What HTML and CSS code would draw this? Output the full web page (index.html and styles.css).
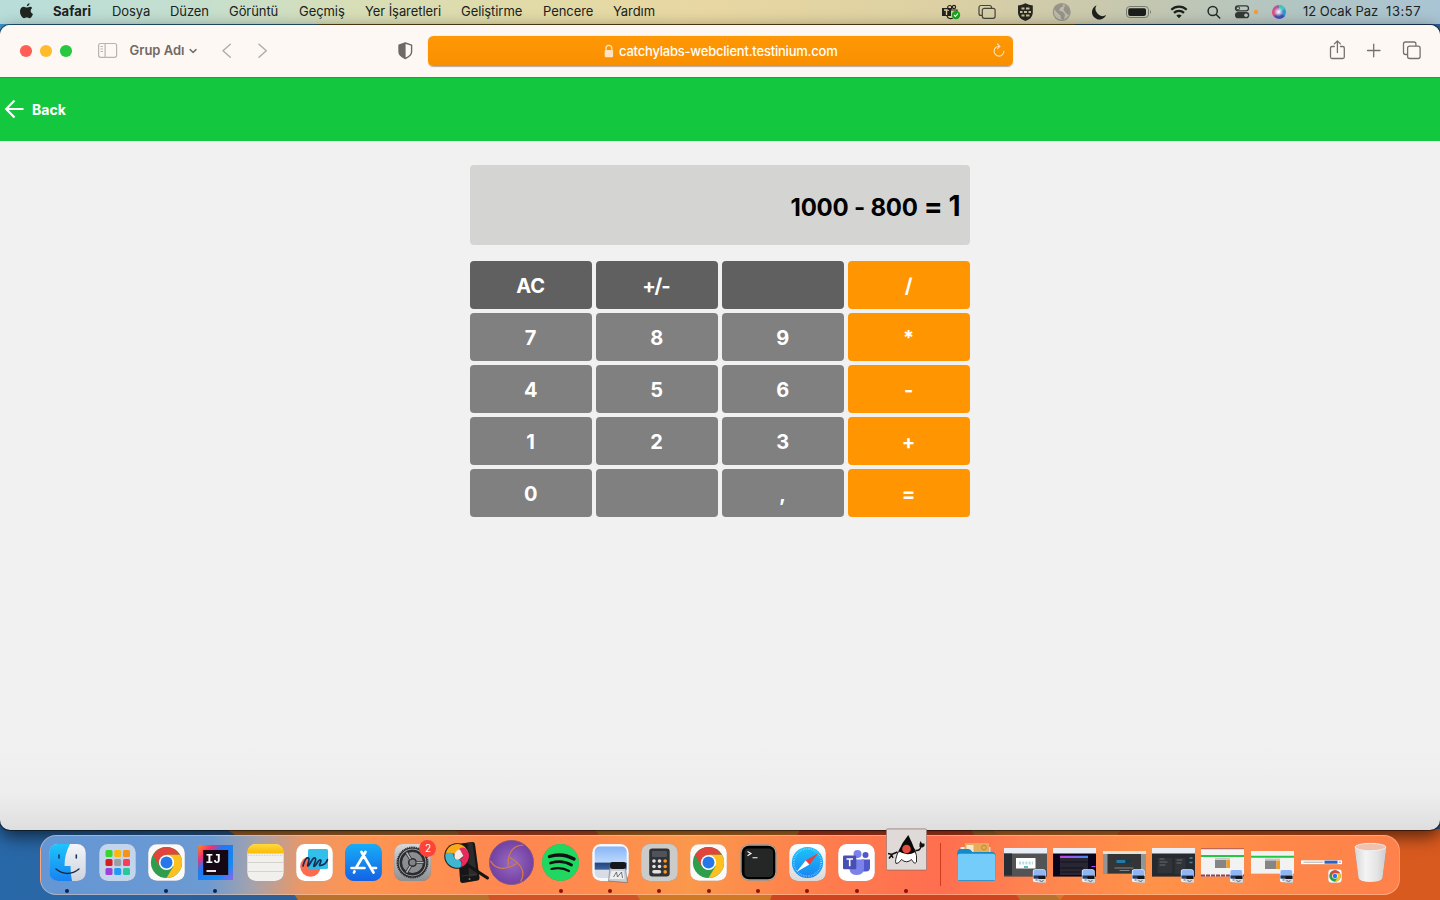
FILE: index.html
```html
<!DOCTYPE html>
<html lang="tr">
<head>
<meta charset="utf-8">
<title>Calculator</title>
<link rel="stylesheet" href="styles.css">
</head>
<body>
<svg class="defs" width="0" height="0" aria-hidden="true">
  <defs>
    <linearGradient id="gBlue" x1="0" y1="0" x2="0" y2="1"><stop offset="0" stop-color="#1cc5fc"/><stop offset="1" stop-color="#1a82f0"/></linearGradient>
    <linearGradient id="gStore" x1="0" y1="0" x2="0" y2="1"><stop offset="0" stop-color="#18adf8"/><stop offset="1" stop-color="#1462e4"/></linearGradient>
    <linearGradient id="gGrey" x1="0" y1="0" x2="0" y2="1"><stop offset="0" stop-color="#d6d8da"/><stop offset="1" stop-color="#8d8f92"/></linearGradient>
    <linearGradient id="gLight" x1="0" y1="0" x2="0" y2="1"><stop offset="0" stop-color="#f3f5f8"/><stop offset="1" stop-color="#cdd3de"/></linearGradient>
    <linearGradient id="gWhite" x1="0" y1="0" x2="0" y2="1"><stop offset="0" stop-color="#fff"/><stop offset="1" stop-color="#d9d9d9"/></linearGradient>
    <linearGradient id="gYellow" x1="0" y1="0" x2="0" y2="1"><stop offset="0" stop-color="#ffd93e"/><stop offset="1" stop-color="#f9bb04"/></linearGradient>
    <linearGradient id="gIj" x1="0" y1="0" x2="1" y2="1"><stop offset="0" stop-color="#ff8a1c"/><stop offset=".22" stop-color="#f92d71"/><stop offset=".38" stop-color="#2178f8"/><stop offset=".75" stop-color="#0d8cf8"/><stop offset="1" stop-color="#9460f0"/></linearGradient>
    <radialGradient id="gPurple"><stop offset="0" stop-color="#966bc2"/><stop offset="1" stop-color="#7340a2"/></radialGradient>
    <linearGradient id="gSky" x1="0" y1="0" x2="0" y2="1"><stop offset="0" stop-color="#86b4f5"/><stop offset=".5" stop-color="#bcd9ff"/><stop offset=".52" stop-color="#25457e"/><stop offset=".72" stop-color="#3c62a0"/><stop offset=".75" stop-color="#d8dce6"/></linearGradient>
    <linearGradient id="gTrash" x1="0" y1="0" x2="1" y2="0"><stop offset="0" stop-color="#d4d4d6"/><stop offset=".35" stop-color="#f4f4f5"/><stop offset=".7" stop-color="#e4e4e5"/><stop offset="1" stop-color="#cbcbcd"/></linearGradient>
    <linearGradient id="gBar" x1="0" y1="0" x2="1" y2="0"><stop offset="0" stop-color="#d43ae8"/><stop offset="1" stop-color="#3e8bf8"/></linearGradient>
    <symbol id="chrome" viewBox="-19 -19 38 38">
      <rect x="-18.3" y="-18.3" width="36.6" height="36.6" rx="8.5" fill="#fbfaf8"/>
      <circle r="15.6" fill="#2f9e4c"/>
      <path d="M-13.5-7.8A15.6 15.6 0 0 1 13.5-7.8L0-7.8L-6.8 3.9Z" fill="#e0443a"/>
      <path d="M13.5-7.8A15.6 15.6 0 0 1 0 15.6L6.8 3.9L0-7.8Z" fill="#fdc01d"/>
      <circle r="7.6" fill="#fff"/><circle r="6" fill="#2678ea"/>
    </symbol>
    <symbol id="photo" viewBox="0 0 14 14">
      <rect x=".2" y=".2" width="13" height="13" rx="2.5" fill="#eef2fa"/>
      <rect x="1" y="1" width="11.6" height="8" rx="1.5" fill="#8fb6f3"/>
      <rect x="1" y="6.5" width="11.6" height="3.2" fill="#26395f"/>
      <path d="M6 7h7v3H6z" fill="#15171c"/><path d="M5 10h8.5v3.8H5z" fill="#d4d7dc"/><path d="M7 11.5l2 1 2-1M3 11h2" stroke="#596273" fill="none"/>
    </symbol>
  </defs>
</svg>

<svg class="wallpaper" viewBox="0 0 1440 900" aria-hidden="true">
  <defs><linearGradient id="wall" x1="0" y1="0" x2="1" y2="0"><stop offset="0" stop-color="#2868a8"/><stop offset=".16" stop-color="#2d5f99"/></linearGradient></defs>
  <rect width="1440" height="900" fill="url(#wall)"/>
  <path d="M0 0H317V400H0z" fill="#3f96cf"/><path d="M317 0H1075V400H317z" fill="#9b7224"/>
  <path d="M226 829Q270 855 298 900H1440V829z" fill="#b8722d"/>
  <path d="M456 829L490 900H640L595 829z" fill="#d05327"/>
  <path d="M595 829L640 900H830L800 829z" fill="#cf7926"/>
  <path d="M800 829L770 900H1020L970 829z" fill="#cc4420"/>
  <path d="M992 829L1060 900H1130L1122 829z" fill="#d3782a"/>
  <path d="M1122 829L1060 900H1440V829z" fill="#d95a1f"/>
</svg>

<header class="menubar">
  <svg class="apple" viewBox="18 0 35 24" width="35" height="24"><path fill="#22251f" d="M29.6 3.2c.1 1.5-1.3 3-2.8 3-.1-1.500 1.200-2.900 2.800-3zM32.200 8c-2.300 1.500-1.900 4.800.8 5.900-.8 2.200-2.100 4.300-3.500 4.300-1.100 0-1.400-.6-2.700-.6s-1.700.6-2.700.6c-2 0-4.100-3.700-4.100-6.700 0-2.900 1.800-4.700 3.800-4.700 1.200 0 2.200.8 3 .8.700 0 2-.9 3.400-.8.800 0 1.500.4 2 1.200z"/></svg>
  <nav class="menus">
    <span class="m m-app">Safari</span><span class="m m-58">Dosya</span><span class="m m-59">Düzen</span><span class="m m-70">Görüntü</span><span class="m m-66">Geçmiş</span><span class="m m-96">Yer İşaretleri</span><span class="m m-82">Geliştirme</span><span class="m m-70">Pencere</span><span class="m m-59">Yardım</span>
  </nav>
  <div class="status">
    <svg viewBox="932 0 37 24" width="37" height="24"><path d="M942 8h9v8h-9z" fill="#24231c"/><path d="M944 10h5M946.500 10v5" stroke="#dccfa3" stroke-width="1.400"/><g fill="none" stroke="#24231c" stroke-width="1.200"><circle cx="949.700" cy="7.500" r="2"/><circle cx="954" cy="7" r="1.600"/><path d="M951 10h6v3M947 16c1 3 4 3 6 2"/></g><circle cx="956" cy="15" r="4.200" fill="#18a51c"/><path d="M954 15l1.400 1.500 2.600-3" fill="none" stroke="#fff" stroke-width="1.100"/></svg>
    <svg viewBox="969 0 37 24" width="37" height="24"><g fill="none" stroke="#47453a" stroke-width="1.200"><path d="M982 15.400h-1a2 2 0 0 1-2-2V7.500a2 2 0 0 1 2-2h8.500a2 2 0 0 1 2 2v.5"/><rect x="982.300" y="8.300" width="12.800" height="10" rx="2"/></g></svg>
    <svg viewBox="1006 0 37 24" width="37" height="24"><path d="M1018 5.500q4-.2 7.500-2.200 3.500 2 7.300 2.200v7q0 6-7.400 8.400-7.400-2.400-7.400-8.400z" fill="#27261f"/><path d="M1021.500 7.500h3v2h-3zM1026 7.500h3.500v2h-3.500zM1020 11h2.500v2h-2.500zM1024 11h3v2h-3zM1028.500 11h2.500v2h-2.500zM1021.500 14.500h3v2h-3zM1026 14.500h3.500v2h-3.500z" fill="#c4bd99"/></svg>
    <svg viewBox="1043 0 37 24" width="37" height="24"><circle cx="1061.700" cy="12" r="8.400" fill="#bfbba7" stroke="#98968a" stroke-width="1.300"/><path d="M1054 9q2-5 8-5.300l1.500 2.500-3 1.300-1.500 3 3.500 1 2.500 3-1 5h-2.500l-1-4-3.500-3zM1065 5l4 3 1 5-2 2-3-3-1.500-2.500z" fill="#96948a"/></svg>
    <svg viewBox="1080 0 37 24" width="37" height="24"><path d="M1096.500 5.300a7.400 7.400 0 1 0 9.700 9.700 7.100 7.100 0 0 1-9.700-9.700z" fill="#1f201d"/></svg>
    <svg viewBox="1117 0 42 24" width="42" height="24"><rect x="1126.500" y="6.500" width="22" height="11" rx="3.300" fill="none" stroke="#777b70"/><rect x="1128.200" y="8.200" width="17.800" height="7.700" rx="1.800" fill="#1c1e1b"/><path d="M1150 10q2 2 0 4z" fill="#777b70"/></svg>
    <svg viewBox="1159 0 40 24" width="40" height="24"><g fill="none" stroke="#1d211e" stroke-width="2.200"><path d="M1171.300 9.700a11.200 11.200 0 0 1 15.400 0M1174 12.900a7.300 7.300 0 0 1 10 0"/></g><path d="M1176.300 15.500q2.700-2.200 5.400 0L1179 18.200z" fill="#1d211e"/></svg>
    <svg viewBox="1199 0 30 24" width="30" height="24"><g fill="none" stroke="#252927" stroke-width="1.500" stroke-linecap="round"><circle cx="1212.700" cy="11" r="4.600"/><path d="M1216.200 14.500l3.500 3.500"/></g></svg>
    <svg viewBox="1229 0 34 24" width="34" height="24"><rect x="1235.500" y="5.800" width="13" height="5" rx="2.500" fill="none" stroke="#343936" stroke-width="1.300"/><circle cx="1238" cy="8.300" r="1.600" fill="none" stroke="#343936"/><rect x="1235" y="12" width="14.300" height="6.300" rx="3.100" fill="#343936"/><circle cx="1246" cy="15.200" r="1.800" fill="#bbc3bd"/><circle cx="1256" cy="12" r="2.200" fill="#f79b32"/></svg>
    <svg viewBox="1263 0 32 24" width="32" height="24"><defs><linearGradient id="siri"><stop stop-color="#f04478"/><stop offset=".45" stop-color="#965fa8"/><stop offset="1" stop-color="#18a2dc"/></linearGradient><radialGradient id="glow"><stop stop-color="#fff"/><stop offset="1" stop-color="#fff" stop-opacity="0"/></radialGradient></defs><circle cx="1279" cy="12" r="7" fill="url(#siri)"/><path d="M1274 16q5-4 11 0a7 7 0 0 1-11 0z" fill="#3854b8"/><path d="M1279 5a7 7 0 0 1 6 4l-6 3z" fill="#42c6bd"/><circle cx="1278.500" cy="12" r="4.800" fill="url(#glow)"/></svg>
    <span class="date">12 Ocak Paz</span><span class="time">13:57</span>
  </div>
</header>

<main class="window">
  <div class="toolbar">
    <div class="tools-left">
      <svg viewBox="0 25 129 52" width="129" height="52"><circle cx="26" cy="51" r="6.100" fill="#ff5d55"/><circle cx="46" cy="51" r="6.100" fill="#ffbb2e"/><circle cx="66" cy="51" r="6.100" fill="#28c840"/><g fill="none" stroke="#b9b4b0" stroke-width="1.200"><rect x="98.600" y="43.500" width="18" height="13.800" rx="2"/><path d="M105.100 43.500v14M100.500 46.500h2.500M100.500 49h2.500M100.500 51.500h2.500"/></g></svg>
      <span class="group">Grup Adı</span>
      <svg viewBox="186 25 94 52" width="94" height="52"><g fill="none" stroke-linecap="round" stroke-linejoin="round"><path d="M190.200 49.600l2.900 2.900 2.900-2.900" stroke="#77716d" stroke-width="1.500"/><path d="M230.300 44.300l-7.300 6.500 7.300 6.500M259 44.300l7.300 6.500-7.300 6.500" stroke="#b3adaa" stroke-width="1.500"/></g></svg>
    </div>
    <svg class="privacy" viewBox="393 25 34 52" width="34" height="52"><path d="M405.300 43l6.300 2.200v6.600q0 4-6.300 6.700-6.300-2.700-6.300-6.700v-6.600z" fill="none" stroke="#6f6965" stroke-width="1.400" stroke-linejoin="round"/><path d="M405.600 43l-6.600 2.200v6.600q0 4 6.600 6.700z" fill="#6f6965"/></svg>
    <div class="address">
      <svg class="lock" viewBox="604 44 10 14" width="10" height="14"><path d="M606 50.500v-2.200a2.900 2.900 0 0 1 5.800 0v2.200" fill="none" stroke="#ffe5c4" stroke-width="1.300"/><rect x="604.700" y="50" width="8.400" height="7.200" rx="1.200" fill="#ffe5c4"/></svg>
      <span class="url">catchylabs-webclient.testinium.com</span>
      <svg class="reload" viewBox="991 43 16 16" width="16" height="16"><path d="M999 46.300a4.900 4.900 0 1 0 4.900 4.900M997.500 44l2.400 2.400-2.400 2.300" fill="none" stroke="#ffe0b8" stroke-width="1.100" stroke-linecap="round"/></svg>
    </div>
    <svg class="tools-right" viewBox="1320 25 120 52" width="120" height="52"><g fill="none" stroke="#77716d" stroke-width="1.300" stroke-linecap="round" stroke-linejoin="round"><path d="M1334.300 46.500h-2.300a1.500 1.500 0 0 0-1.500 1.500v9a1.500 1.500 0 0 0 1.500 1.500h10.800a1.500 1.500 0 0 0 1.500-1.500v-9a1.500 1.500 0 0 0-1.500-1.500h-2.300M1337.400 52.500v-11.300M1334.400 43.900l3-3 3 3M1367.500 50.500h12.500M1373.700 44.200v12.600M1407.300 54.500h-1.800a2 2 0 0 1-2-2v-8.500a2 2 0 0 1 2-2h8.400a2 2 0 0 1 2 2v1.800"/><rect x="1407.600" y="46.200" width="12.500" height="12.300" rx="2"/></g></svg>
  </div>
  <div class="appbar">
    <svg viewBox="0 97 32 24" width="32" height="24"><path d="M23.500 109H6.500M14.500 100.600l-8.300 8.400 8.300 8.400" fill="none" stroke="#fff" stroke-width="2.200"/></svg>
    <span class="back">Back</span>
  </div>
  <section class="calculator">
    <div class="display"><span class="expr">1000 - 800</span><span class="result">= 1</span></div>
    <div class="keys">
      <button class="key fn">AC</button><button class="key fn sign">+/-</button><button class="key fn"></button><button class="key op">/</button>
      <button class="key">7</button><button class="key">8</button><button class="key">9</button><button class="key op">*</button>
      <button class="key">4</button><button class="key">5</button><button class="key">6</button><button class="key op">-</button>
      <button class="key">1</button><button class="key">2</button><button class="key">3</button><button class="key op">+</button>
      <button class="key">0</button><button class="key"></button><button class="key">,</button><button class="key op">=</button>
    </div>
  </section>
</main>

<footer class="dock">
  <!-- Finder -->
  <div class="app on blue"><svg viewBox="-24.500 0 49 60"><rect x="-18.300" y="9" width="36.600" height="37" rx="8.500" fill="url(#gLight)"/><path d="M2.500 9H-9.800a8.500 8.500 0 0 0-8.500 8.500v20a8.500 8.500 0 0 0 8.500 8.500H4.500Q3 39 3 31H-3Q-3 19 2.500 9z" fill="url(#gBlue)"/><path d="M-8.500 20v3M8.800 20v3" stroke="#17385b" stroke-width="1.600" stroke-linecap="round"/><path d="M-11.500 34Q0 43 11.500 34" fill="none" stroke="#17263a" stroke-width="1.300" stroke-linecap="round"/></svg></div>
  <!-- Launchpad -->
  <div class="app"><svg viewBox="-24.500 0 49 60"><rect x="-18.300" y="9" width="36.600" height="37" rx="8.500" fill="#c3d5ec"/><g><rect x="-12" y="15" width="7" height="7" rx="1.500" fill="#38d32e"/><rect x="-3.300" y="15" width="7" height="7" rx="1.500" fill="#fbb80b"/><rect x="5.500" y="15" width="7" height="7" rx="1.500" fill="#f4921b"/><rect x="-12" y="24" width="7" height="7" rx="1.500" fill="#d51d22"/><rect x="-3.300" y="24" width="7" height="7" rx="1.500" fill="#9b9da0"/><rect x="5.500" y="24" width="7" height="7" rx="1.500" fill="#fa3b5c"/><rect x="-12" y="33" width="7" height="7" rx="1.500" fill="#9e3fd6"/><rect x="-3.300" y="33" width="7" height="7" rx="1.500" fill="#1f9bf6"/><rect x="5.500" y="33" width="7" height="7" rx="1.500" fill="#2cc69a"/></g></svg></div>
  <!-- Chrome -->
  <div class="app on blue"><svg viewBox="-24.500 0 49 60"><use href="#chrome" x="-19" y="8.500" width="38" height="38"/></svg></div>
  <!-- IntelliJ -->
  <div class="app on blue"><svg viewBox="-24.500 0 49 60"><rect x="-17.300" y="10" width="34.600" height="35" fill="url(#gIj)"/><rect x="-12.300" y="15" width="25" height="25" fill="#150713"/><text x="-10" y="27.500" class="ij">IJ</text><path d="M-9 36h9.500" stroke="#fff" stroke-width="1.800"/></svg></div>
  <!-- Notes -->
  <div class="app"><svg viewBox="-24.500 0 49 60"><rect x="-18.300" y="9" width="36.600" height="37" rx="8.500" fill="#f1f0ec"/><path d="M-18.300 18.500v-1A8.500 8.500 0 0 1-9.800 9H9.800a8.500 8.500 0 0 1 8.500 8.500v1z" fill="url(#gYellow)"/><path d="M-17.500 20.300h35" stroke="#b5b3ae" stroke-dasharray=".7 .9" stroke-width=".7"/><path d="M-18 27.500h36M-18 36.500h36" stroke="#c8c6c1" stroke-width=".7"/></svg></div>
  <!-- Freeform -->
  <div class="app"><svg viewBox="-24.500 0 49 60"><rect x="-18.300" y="9" width="36.600" height="37" rx="8.500" fill="#fff"/><circle cx="-4" cy="31.500" r="10.300" fill="#ff6c4d"/><rect x="-6.500" y="14" width="20" height="20" rx="1.500" fill="#27bdea" opacity=".95"/><path d="M-11.500 31C-10 25-8 22-6 23S-8 31-6.500 31-2 22 .5 23-2 31-.5 31.500 4 24 6 25 3 31 6 30.500 12 28 13 24.500" fill="none" stroke="#122e56" stroke-width="1.700" stroke-linecap="round"/></svg></div>
  <!-- App Store -->
  <div class="app"><svg viewBox="-24.500 0 49 60"><rect x="-18.300" y="9" width="36.600" height="37" rx="8.500" fill="url(#gStore)"/><g stroke="#fff" stroke-width="2.700" stroke-linecap="round" fill="none"><path d="M2-11L-7 4M-2-11L10 9.500M-12 5H1M8 5h4.500M-9 8.500l-.5 1" transform="translate(0 28)"/></g></svg></div>
  <!-- Settings -->
  <div class="app"><svg viewBox="-24.500 0 49 60"><rect x="-18.300" y="9" width="36.600" height="37" rx="8.500" fill="url(#gGrey)"/><g transform="translate(0 27.500)" fill="none" stroke="#292b2e"><circle r="14.500" fill="#a5a7aa" stroke-width="1.200"/><circle r="15" stroke-width="2" stroke-dasharray="1 .8"/><circle r="11.700" fill="#8b8d90" stroke-width="2.500"/><circle r="3.800" fill="#828487" stroke-width="1.500"/><path d="M4 0H11M-2-3.500L-6-10M-2 3.500L-6 10" stroke-width="3.200"/><path d="M4 0H11M-2-3.500L-6-10M-2 3.500L-6 10" stroke="#b1b3b5" stroke-width="1.500"/></g></svg><span class="badge">2</span></div>
  <!-- Device inspector -->
  <div class="app"><svg class="spill" viewBox="-24.500 0 49 60"><path d="M-5 9L10 7Q12 7 12.400 9L17 43Q17 45 15 45.500L0 48Q-2 48-2.300 46z" fill="#161616"/><path d="M5 8l5-.5 4.500 33-8 1.500z" fill="#2b2b2b"/><path d="M-1 41l16-2" stroke="#444" stroke-width=".5"/><circle cx="7" cy="44" r="1" fill="#777"/><path d="M5 30L25 43" stroke="#151515" stroke-width="3" stroke-linecap="round"/><circle cx="-5.500" cy="21" r="12.700" fill="#222"/><path d="M-17 19A11.700 11.700 0 0 1 5 15.500Q-3 11-8 19-12 17-17 19z" fill="#fba916"/><path d="M5 15.500A11.700 11.700 0 0 1-2 32.200Q2 27-3.500 24.500Q4 22 1 14z" fill="#e92a5d"/><path d="M-2 32.200A11.700 11.700 0 0 1-17 19Q-12 16-9 19-9 26-3.500 24.500 1 28-2 32.200z" fill="#3fb7d0"/><path d="M-3 13.500Q2 11 5 15.500 7 19 6 23 3 19 1 21z" fill="#e92a5d"/><path d="M-8 19Q-6 14-2.500 14.500L1 21-3.500 24.500Q-9 26-8 19z" fill="#f7e9e4"/></svg></div>
  <!-- Appium -->
  <div class="app"><svg viewBox="-24.500 0 49 60"><circle cy="27.500" r="22" fill="url(#gPurple)" stroke="#8a5c8c" stroke-width=".8"/><g transform="translate(0 27.500)" fill="none" stroke="#d57c42" stroke-width="1.200"><path id="blade" d="M12-17.500Q-4-17-3.500 4"/><use href="#blade" transform="rotate(120)"/><use href="#blade" transform="rotate(240)"/></g></svg></div>
  <!-- Spotify -->
  <div class="app on"><svg viewBox="-24.500 0 49 60"><circle cy="27.500" r="18.500" fill="#20d761"/><g fill="none" stroke="#111" stroke-linecap="round"><path d="M-11 21.500Q2 17.500 13.500 24" stroke-width="3.400"/><path d="M-10 28Q2 24.500 11 30" stroke-width="2.800"/><path d="M-9 34Q1 31.500 8.500 36" stroke-width="2.200"/></g></svg></div>
  <!-- Preview -->
  <div class="app on"><svg viewBox="-24.500 0 49 60"><rect x="-18.300" y="9" width="36.600" height="37" rx="8.500" fill="#f7f8fa"/><rect x="-15.800" y="11.500" width="32" height="31.500" rx="5" fill="url(#gSky)"/><path d="M0 28L-2 46l19 1.500L14 28z" fill="#c9ced5" stroke="#777" stroke-width=".6"/><path d="M1 36h12l1 8H-1z" fill="#eceeef"/><path d="M3 42l3-5 1 5 4-5 1 6" stroke="#555" stroke-width=".8" fill="none"/><rect x="-.5" y="27" width="16" height="7" rx="2.500" fill="#15171a"/></svg></div>
  <!-- Calculator -->
  <div class="app on"><svg viewBox="-24.500 0 49 60"><rect x="-18.300" y="9" width="36.600" height="37" rx="8.500" fill="#cbcbca"/><rect x="-10.300" y="13.500" width="20.500" height="28" rx="3" fill="#303236"/><rect x="-7.500" y="16" width="15" height="6" rx="1" fill="#50545a"/><g fill="#e1e1e1"><circle cx="-5.500" cy="26" r="1.800"/><circle cy="26" r="1.800"/><circle cx="-5.500" cy="31.500" r="1.800"/><circle cy="31.500" r="1.800"/><rect x="-7.300" y="35" width="9" height="3.600" rx="1.800"/></g><g fill="#ff951b"><circle cx="5.700" cy="26" r="1.800"/><circle cx="5.700" cy="31.500" r="1.800"/><circle cx="5.700" cy="36.900" r="1.800"/></g></svg></div>
  <div class="app on"><svg viewBox="-24.500 0 49 60"><use href="#chrome" x="-19" y="8.500" width="38" height="38"/></svg></div>
  <!-- Terminal -->
  <div class="app on"><svg viewBox="-24.500 0 49 60"><rect x="-17.500" y="10" width="35" height="35" rx="8" fill="#000" stroke="#a4a5a5" stroke-width="1.300"/><rect x="-14" y="13.500" width="28.500" height="28.500" rx="4" fill="#252626"/><path d="M-11 16.500l3.500 2-3.500 2.200M-6 22.700h5" fill="none" stroke="#fff" stroke-width="1.100"/></svg></div>
  <!-- Safari -->
  <div class="app on"><svg viewBox="-24.500 0 49 60"><rect x="-18.300" y="9" width="36.600" height="37" rx="8.500" fill="url(#gWhite)"/><circle cy="27.500" r="15.600" fill="url(#gBlue)"/><circle cy="27.500" r="13.700" fill="none" stroke="#9fe0ff" stroke-width="1.700" stroke-dasharray=".5 1.200"/><path d="M11 18L1.800 29.500-1.800 25.500z" fill="#f33b38"/><path d="M-11 37L1.800 29.500-1.800 25.500z" fill="#fff"/></svg></div>
  <!-- Teams -->
  <div class="app on"><svg viewBox="-24.500 0 49 60"><rect x="-18.300" y="9" width="36.600" height="37" rx="8.500" fill="#fff"/><circle cx="1" cy="19" r="4" fill="#7b83eb"/><circle cx="9" cy="20" r="3" fill="#5059c9"/><path d="M5 24.500h8.500v8q0 4-4 4H5z" fill="#5059c9"/><path d="M-7 24.500H7.500V33q0 7-7 7T-7 34z" fill="#7b83eb"/><rect x="-13.500" y="20.500" width="13.300" height="13.800" rx="1.200" fill="#484fb3"/><path d="M-10 24h6.500M-6.800 24v7.300" stroke="#fff" stroke-width="1.600"/></svg></div>
  <!-- Java -->
  <div class="app on java"><svg viewBox="-24.500 -7 49 67"><rect x="-20" y="-6" width="40" height="41" rx="1" fill="#dfd9d8" stroke="#a77b72" stroke-width=".7"/><path d="M-9 17l-6 2.500M-18.500 18.500l4 1M-14.500 19.500l-3 4M-15 19.500l1.500 3.500M9 15.500Q14 16 14.500 11" stroke="#111" stroke-width="1.500" fill="none"/><path d="M13 12v-3l1-3 1.500 2.500H18v2.500l-2 1.500z" fill="#111"/><path d="M-8.500 17Q-12 26-10.500 28.500-8 29-5 24.500 0 29 5 24.500 8 30 10 27 11 21 8 14z" fill="#fff" stroke="#111" stroke-width=".9"/><path d="M1.800 0Q6 8 9 17 0 22-8 16-4 7 1.800 0z" fill="#090909"/><circle cx="0" cy="14" r="4.300" fill="#e24b3e"/></svg></div>
  <div class="sep"></div>
  <!-- Folder -->
  <div class="app"><svg viewBox="-24.500 0 49 60"><path d="M-16 12h30v10h-30z" fill="#eee"/><path d="M-12 8h25v13h-25z" fill="#e6ac58"/><path d="M-10 10h7v8h-7z" fill="#f3e8d0"/><circle cx="7.500" cy="12.500" r="2.300" fill="none" stroke="#ba7b2b" stroke-width=".8"/><path d="M-19 18q0-4 4-4h7q2 0 4 3h19q4 0 4 4v22h-38z" fill="#168ac8"/><rect x="-19" y="18.700" width="38" height="27.300" rx="2.500" fill="#74ccfb"/><path d="M-18 45.500h36" stroke="#3894c5"/></svg></div>
  <!-- Minimised windows -->
  <div class="app"><svg viewBox="-24.500 0 49 60"><path d="M-21.500 13h43v28.500h-43z" fill="#515355"/><path d="M-21.500 13h43v5.500h-43z" fill="#e9edf5"/><path d="M-21.500 18.500h8v22h-8z" fill="#282d36"/><path d="M-9.500 23H10v10.500H-9.500z" fill="#fff"/><path d="M-6.500 28h14" stroke="#b6dbe5" stroke-width="3" stroke-dasharray="2 1.200"/><path d="M-1.500 32h4" stroke="#32b19d" stroke-width="1.600"/><use href="#photo" x="7" y="34" width="14" height="14"/></svg></div>
  <div class="app"><svg viewBox="-24.500 0 49 60"><path d="M-21.500 13h43v28.500h-43z" fill="#09051d"/><path d="M-21.500 13h43v5.500h-43z" fill="#e9edf5"/><path d="M-14.500 20h28v20h-28z" fill="#292633"/><path d="M-14.500 21h28v2h-28z" fill="url(#gBar)"/><path d="M-14 27h27M-14 33h23M-14 37h20" stroke="#11101c" stroke-width="1"/><path d="M17 31.500h4" stroke="#b34cf8"/><use href="#photo" x="7" y="34" width="14" height="14"/></svg></div>
  <div class="app"><svg viewBox="-24.500 0 49 60"><path d="M-21.500 16h43v22.500h-43z" fill="#949494"/><path d="M-17 19h33.500v19.500H-17z" fill="#343536"/><path d="M-21.500 16h43v3h-43z" fill="#e5e1d3"/><path d="M-8 26.500H1" stroke="#2479a6" stroke-width="3"/><path d="M1 26.500h5" stroke="#17384a" stroke-width="3"/><path d="M-10 33H9M-5 35.500H5" stroke="#aaa" stroke-width=".7"/><use href="#photo" x="7" y="34" width="14" height="14"/></svg></div>
  <div class="app"><svg viewBox="-24.500 0 49 60"><path d="M-21.500 13h43v28.500h-43z" fill="#252a30"/><path d="M-21.500 13h43v5.500h-43z" fill="#e9edf5"/><path d="M-16 23H-1v15h-15zM1 23h11v16H1z" fill="#303337"/><path d="M-14 24h5M-14 27h8M-14 30h6M3 25h6M3 28h5" stroke="#818789" stroke-width=".7"/><path d="M16 23h3M16 27.500h3" stroke="#45889a" stroke-width="1.500"/><use href="#photo" x="7" y="34" width="14" height="14"/></svg></div>
  <div class="app"><svg viewBox="-24.500 0 49 60"><path d="M-21.500 13h43v28.500h-43z" fill="#f2f2f2"/><path d="M-21.500 13.700h43" stroke="#bd6959" stroke-width="1.300"/><path d="M-21.500 20h43v2h-43z" fill="#24c744"/><path d="M-7.500 23H7.500v1.800H-7.500z" fill="#c8c8c8"/><path d="M-7.500 25H4v8H-7.500z" fill="#858585"/><path d="M4 25h3.500v8H4z" fill="#ff9a17"/><path d="M-21.500 40.500h43" stroke="#98404d" stroke-width="2" stroke-dasharray="4 1"/><use href="#photo" x="7" y="34" width="14" height="14"/></svg></div>
  <div class="app"><svg viewBox="-24.500 0 49 60"><path d="M-21.500 16h43v22.700h-43z" fill="#f2f2f2"/><path d="M-21.500 20.700h43v2h-43z" fill="#24c744"/><path d="M-7.500 23.500H7.500v1.800H-7.500z" fill="#c8c8c8"/><path d="M-7.500 25.500H4V34H-7.500z" fill="#858585"/><path d="M4 25.500h3.500V34H4z" fill="#ff9a17"/><use href="#photo" x="7" y="34" width="14" height="14"/></svg></div>
  <div class="app"><svg viewBox="-24.500 0 49 60"><path d="M-20.500 25.200h41v4h-41z" fill="#fff"/><path d="M-18 27.200H2" stroke="#888" stroke-width=".7"/><path d="M3 25.700h13v3H3z" fill="#2762c8"/><path d="M17 27.200h2.500" stroke="#7799d8"/><use href="#chrome" x="6.500" y="34" width="14" height="14"/></svg></div>
  <!-- Trash -->
  <div class="app"><svg viewBox="-24.500 0 49 60"><path d="M-16 12L-12 43Q-11 47 0 47T12 43L16 12z" fill="url(#gTrash)"/><ellipse cy="12" rx="15.500" ry="3.700" fill="#efc1af" stroke="#eee" stroke-width="1"/></svg></div>
</footer>
</body>
</html>
```
FILE: styles.css
```css
* { box-sizing: border-box; }
body {
  margin: 0;
  width: 1440px;
  height: 900px;
  overflow: hidden;
  display: flex;
  flex-direction: column;
  font-family: Inter, "Liberation Sans", sans-serif;
}
svg { display: block; flex: none; }
.defs { position: absolute; }
.wallpaper { position: absolute; inset: 0; z-index: -1; width: 1440px; height: 900px; }

.menubar {
  height: 24px;
  flex: none;
  padding-left: 18px;
  display: flex;
  background: linear-gradient(90deg, #b8ddda 0, #c5dfce 200px, #d7deb7 350px, #e3daa5 560px, #e8d7a2 700px, #ddd1a3 930px, #c4c7b0 1140px, #b1c5c4 1300px, #a9c4d3 1440px);
  color: #20221d;
  font-size: 13px;
  line-height: 23px;
}
.menus { display: flex; flex: 1; }
.m { white-space: nowrap; width: 59px; letter-spacing: -.07px; }
.m-app { font-weight: 700; letter-spacing: .1px; }
.m-58 { width: 58px; }
.m-59 { width: 59px; }
.m-70 { width: 70px; }
.m-66 { width: 66px; }
.m-96 { width: 96px; }
.m-82 { width: 82px; }
.status { display: flex; width: 508px; white-space: nowrap; }
.date { margin-left: 8px; width: 83px; }
.time { width: 40px; letter-spacing: .6px; }

.window {
  height: 805px;
  margin-top: 1px;
  flex: none;
  background: #f1f1f1 linear-gradient(#f1f1f1 720px, #ededed 770px, #dedede 805px);
  border-radius: 10px;
  overflow: hidden;
  box-shadow: 0 0 0 1px rgba(0, 0, 0, .45), 0 6px 18px rgba(0, 0, 0, .65);
}
.toolbar {
  height: 52px;
  display: flex;
  background: #fef8f4;
}
.tools-left { display: flex; width: 393px; }
.group {
  width: 57px;
  padding-left: .5px;
  font-size: 13px;
  font-weight: 600;
  line-height: 51px;
  color: #6f6965;
  white-space: nowrap;
}
.address {
  width: 585px;
  height: 30px;
  margin: 11px 0 0 .5px;
  border-radius: 5.500px;
  background: linear-gradient(#ff9805, #f98f00);
  box-shadow: 0 .5px 1px rgba(90, 70, 50, .45);
  display: flex;
  align-items: center;
}
.lock { margin-left: 176px; }
.url {
  margin-left: 5.500px;
  width: 371.500px;
  color: #fff;
  font-size: 13px;
  font-weight: 500;
  letter-spacing: -.21px;
  line-height: 30px;
}
.tools-right { margin-left: auto; }
.appbar {
  height: 64px;
  padding-bottom: 1px;
  display: flex;
  align-items: center;
  background: #13c83f;
  border-top: 1px solid #10ab37;
}
.back { color: #fff; font-size: 14px; font-weight: 700; }

.calculator { width: 500px; margin: 24px auto 0; }
.display {
  height: 80px;
  padding: 0 10px 0 0;
  border-radius: 4px;
  background: #d4d4d2;
  display: flex;
  justify-content: flex-end;
  align-items: baseline;
  gap: 6px;
  line-height: 82px;
  font-weight: 700;
  color: #000;
}
.expr { font-size: 24px; letter-spacing: -.22px; }
.result { font-size: 28px; letter-spacing: -.5px; }
.keys {
  margin-top: 16px;
  display: grid;
  grid-template-columns: repeat(4, 122px);
  grid-auto-rows: 48px;
  gap: 4px;
}
.key {
  border: 0;
  padding: 2px 1px 0 0;
  border-radius: 4px;
  background: #808080;
  color: #fff;
  font: 700 20px Inter, "Liberation Sans", sans-serif;
  letter-spacing: -.3px;
}
.fn { background: #606060; }
.sign { padding-right: 2.500px; letter-spacing: -1.200px; }
.op { background: #ff9500; }

.dock {
  width: 1360px;
  height: 60px;
  flex: none;
  margin: 5px 40px 0;
  padding-left: 2.200px;
  display: flex;
  border: 1px solid rgba(255, 210, 180, .45);
  border-radius: 16px;
  background: linear-gradient(95deg, #6496d5 0, #6c9ad2 170px, #a5a2ac 215px, #ed9764 265px, #ff9451 330px, #ff8750 475px, #ff8a4e 550px, #fa984b 650px, #ff7d4d 780px, #ff6e50 900px, #ff8150 980px, #ff9248 1110px, #ff8749 1240px, #ff804b 1360px);
}
.app { width: 49.340px; position: relative; flex: none; }
.app > svg { width: 49px; height: 60px; margin-top: -1px; filter: drop-shadow(0 .6px .6px rgba(0, 0, 0, .3)); }
.app > .spill { overflow: visible; }
.java > svg { height: 67px; margin-top: -8px; }
.on::after {
  content: "";
  position: absolute;
  left: 22.300px;
  top: 53px;
  width: 4px;
  height: 4px;
  border-radius: 50%;
  background: #8b1109;
}
.blue::after { background: #0c2450; }
.ij { font: 700 13px "Liberation Mono", monospace; fill: #fff; }
.badge {
  position: absolute;
  left: 31px;
  top: 4px;
  width: 17px;
  height: 17px;
  border-radius: 50%;
  background: #fb4437;
  color: #fff;
  font-size: 10px;
  line-height: 17px;
  text-align: center;
}
.sep { width: 1px; height: 43px; margin: 7px 10.500px 0 9px; background: #c93e1c; }
```
